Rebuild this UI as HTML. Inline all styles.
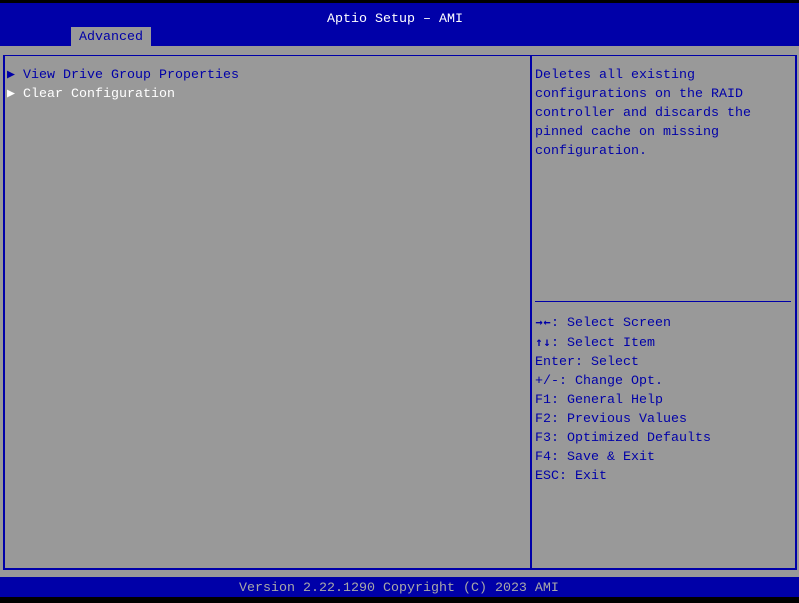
<!DOCTYPE html>
<html><head><style>
*{margin:0;padding:0}
body{width:799px;height:603px;background:#000;position:relative;overflow:hidden;font-family:"Liberation Mono","DejaVu Sans Mono",monospace;font-size:13.33px}
.a{position:absolute;white-space:pre;line-height:19px}
b{display:inline-block;width:8px;text-align:center;font-family:"DejaVu Sans Mono",monospace;font-size:12px}
</style></head><body>
<div style="position:absolute;left:0;top:3px;width:799px;height:43px;background:#0000a8"></div>
<div class="a" style="left:327px;top:10px;color:#fff">Aptio Setup – AMI</div>
<div style="position:absolute;left:71px;top:27px;width:80px;height:19px;background:#999"></div>
<div class="a" style="left:79px;top:28px;color:#0000a8">Advanced</div>
<div style="position:absolute;left:0;top:46px;width:799px;height:531px;background:#999"></div>
<div style="position:absolute;left:3px;top:55px;width:790px;height:512px;border:2px solid #0000a8;border-width:1px 2px 2px 2px"></div>
<div style="position:absolute;left:530px;top:56px;width:2px;height:512px;background:#0000a8"></div>
<div style="position:absolute;left:535px;top:301px;width:256px;height:1px;background:#0000a8"></div>
<div class="a" style="left:7px;top:66px;color:#0000a8">▶ View Drive Group Properties</div>
<div class="a" style="left:7px;top:85px;color:#fff">▶ Clear Configuration</div>
<div class="a" style="left:535px;top:66px;color:#0000a8">Deletes all existing
configurations on the RAID
controller and discards the
pinned cache on missing
configuration.</div>
<div class="a" style="left:535px;top:313px;color:#0000a8"><b>→</b><b>←</b>: Select Screen
<b>↑</b><b>↓</b>: Select Item
Enter: Select
+/-: Change Opt.
F1: General Help
F2: Previous Values
F3: Optimized Defaults
F4: Save &amp; Exit
ESC: Exit</div>
<div style="position:absolute;left:0;top:577px;width:799px;height:20px;background:#0000a8"></div>
<div class="a" style="left:239px;top:579px;color:#a8a8a8">Version 2.22.1290 Copyright (C) 2023 AMI</div>
</body></html>
